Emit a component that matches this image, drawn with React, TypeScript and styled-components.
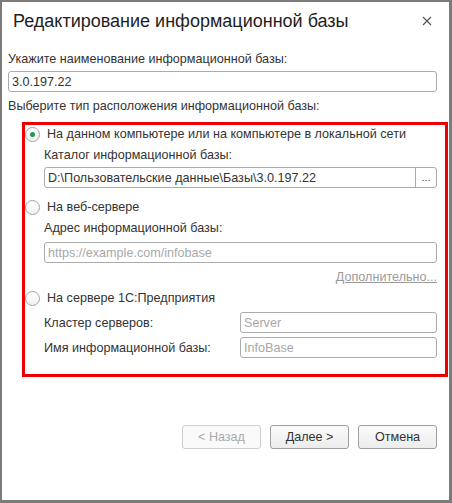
import React from "react";
import styled, { createGlobalStyle } from "styled-components";

const Global = createGlobalStyle`
  html, body { margin: 0; padding: 0; background: #ffffff; }
  body { font-family: "Liberation Sans", Arial, sans-serif; }
  * { box-sizing: border-box; }
`;

const Window = styled.div`
  width: 452px;
  height: 503px;
  background: #ffffff;
  border-style: solid;
  border-color: #7b7b7b;
  border-width: 2px 3px 3px 2px;
  display: flex;
  flex-direction: column;
  color: #333333;
  font-size: 12.6px;
`;

const Header = styled.div`
  height: 38px;
  display: flex;
  align-items: center;
  justify-content: space-between;
  padding: 0 16px 0 11px;
`;

const Title = styled.div`
  font-size: 18px;
  line-height: 22px;
  color: #1e1e1e;
`;

const Close = styled.div`
  width: 12px;
  height: 12px;
  display: flex;
  align-items: center;
  justify-content: center;
`;

const Body = styled.div`
  display: flex;
  flex-direction: column;
  padding: 0 12px 0 6px;
  flex: 1;
`;

const Label = styled.div<{ $mt?: number }>`
  line-height: 16px;
  margin-top: ${(p) => p.$mt ?? 0}px;
  white-space: nowrap;
`;

const Input = styled.div<{ $mt?: number; $placeholder?: boolean; $w?: number }>`
  height: 21px;
  border: 1px solid #ababab;
  border-radius: 3px;
  margin-top: ${(p) => p.$mt ?? 0}px;
  padding: 0 3px;
  display: flex;
  align-items: center;
  color: ${(p) => (p.$placeholder ? "#a8a8a8" : "#333333")};
  white-space: nowrap;
  overflow: hidden;
  background: #ffffff;
  ${(p) => (p.$w ? `width: ${p.$w}px;` : "")}
`;

const InputText = styled.span`
  flex: 1;
`;

const PickButton = styled.div`
  width: 21px;
  align-self: stretch;
  border-left: 1px solid #ababab;
  margin-right: -3px;
  display: flex;
  align-items: center;
  justify-content: center;
  font-size: 11px;
  color: #555555;
  padding-bottom: 2px;
`;

const Group = styled.div`
  margin: 8px -11px 0 14px;
  border: 3px solid #ee0000;
  padding: 0 8px 16px 0;
  display: flex;
  flex-direction: column;
`;

const RadioRow = styled.div<{ $mt?: number }>`
  height: 18px;
  display: flex;
  align-items: center;
  gap: 7px;
  margin-top: ${(p) => p.$mt ?? 0}px;
  white-space: nowrap;
`;

const RadioCircle = styled.div<{ $checked?: boolean }>`
  width: 15px;
  height: 15px;
  border-radius: 50%;
  border: 1px solid #a3a3a3;
  background: linear-gradient(#ffffff, #f0f0f0);
  display: flex;
  align-items: center;
  justify-content: center;
  flex-shrink: 0;
  &::after {
    content: "";
    display: ${(p) => (p.$checked ? "block" : "none")};
    width: 5px;
    height: 5px;
    border-radius: 50%;
    background: #1d9a52;
  }
`;

const Sub = styled.div`
  padding-left: 19px;
  display: flex;
  flex-direction: column;
`;

const Link = styled.div<{ $mt?: number }>`
  align-self: flex-end;
  line-height: 16px;
  margin-top: ${(p) => p.$mt ?? 0}px;
  color: #9a9a9a;
  text-decoration: underline;
`;

const FieldRow = styled.div<{ $mt?: number }>`
  display: flex;
  align-items: center;
  justify-content: space-between;
  margin-top: ${(p) => p.$mt ?? 0}px;
`;

const Footer = styled.div`
  display: flex;
  justify-content: flex-end;
  gap: 9px;
  margin-top: 48px;
`;

const Button = styled.div<{ $disabled?: boolean }>`
  width: 79px;
  height: 24px;
  border: 1px solid ${(p) => (p.$disabled ? "#cfcfcf" : "#9e9e9e")};
  border-radius: 3px;
  background: ${(p) =>
    p.$disabled ? "#fafafa" : "linear-gradient(#fbfbfb, #ececec)"};
  color: ${(p) => (p.$disabled ? "#aaaaaa" : "#333333")};
  display: flex;
  align-items: center;
  justify-content: center;
`;

export default function App() {
  return (
    <>
      <Global />
      <Window>
        <Header>
          <Title>Редактирование информационной базы</Title>
          <Close>
            <svg width="10" height="10" viewBox="0 0 10 10">
              <path d="M1 1 L9 9 M9 1 L1 9" stroke="#555" strokeWidth="1.2" />
            </svg>
          </Close>
        </Header>
        <Body>
          <Label $mt={11}>Укажите наименование информационной базы:</Label>
          <Input $mt={4}>
            <InputText>3.0.197.22</InputText>
          </Input>
          <Label $mt={6}>Выберите тип расположения информационной базы:</Label>
          <Group>
            <RadioRow>
              <RadioCircle $checked />
              <span>На данном компьютере или на компьютере в локальной сети</span>
            </RadioRow>
            <Sub>
              <Label $mt={4}>Каталог информационной базы:</Label>
              <Input $mt={4}>
                <InputText>D:\Пользовательские данные\Базы\3.0.197.22</InputText>
                <PickButton>...</PickButton>
              </Input>
            </Sub>
            <RadioRow $mt={10}>
              <RadioCircle />
              <span>На веб-сервере</span>
            </RadioRow>
            <Sub>
              <Label $mt={4}>Адрес информационной базы:</Label>
              <Input $mt={6} $placeholder>
                <InputText>https://example.com/infobase</InputText>
              </Input>
              <Link $mt={6}>Дополнительно...</Link>
            </Sub>
            <RadioRow $mt={4}>
              <RadioCircle />
              <span>На сервере 1С:Предприятия</span>
            </RadioRow>
            <Sub>
              <FieldRow $mt={5}>
                <Label>Кластер серверов:</Label>
                <Input $placeholder $w={197}>
                  <InputText>Server</InputText>
                </Input>
              </FieldRow>
              <FieldRow $mt={4}>
                <Label>Имя информационной базы:</Label>
                <Input $placeholder $w={197}>
                  <InputText>InfoBase</InputText>
                </Input>
              </FieldRow>
            </Sub>
          </Group>
          <Footer>
            <Button $disabled>&lt; Назад</Button>
            <Button>Далее &gt;</Button>
            <Button>Отмена</Button>
          </Footer>
        </Body>
      </Window>
    </>
  );
}
